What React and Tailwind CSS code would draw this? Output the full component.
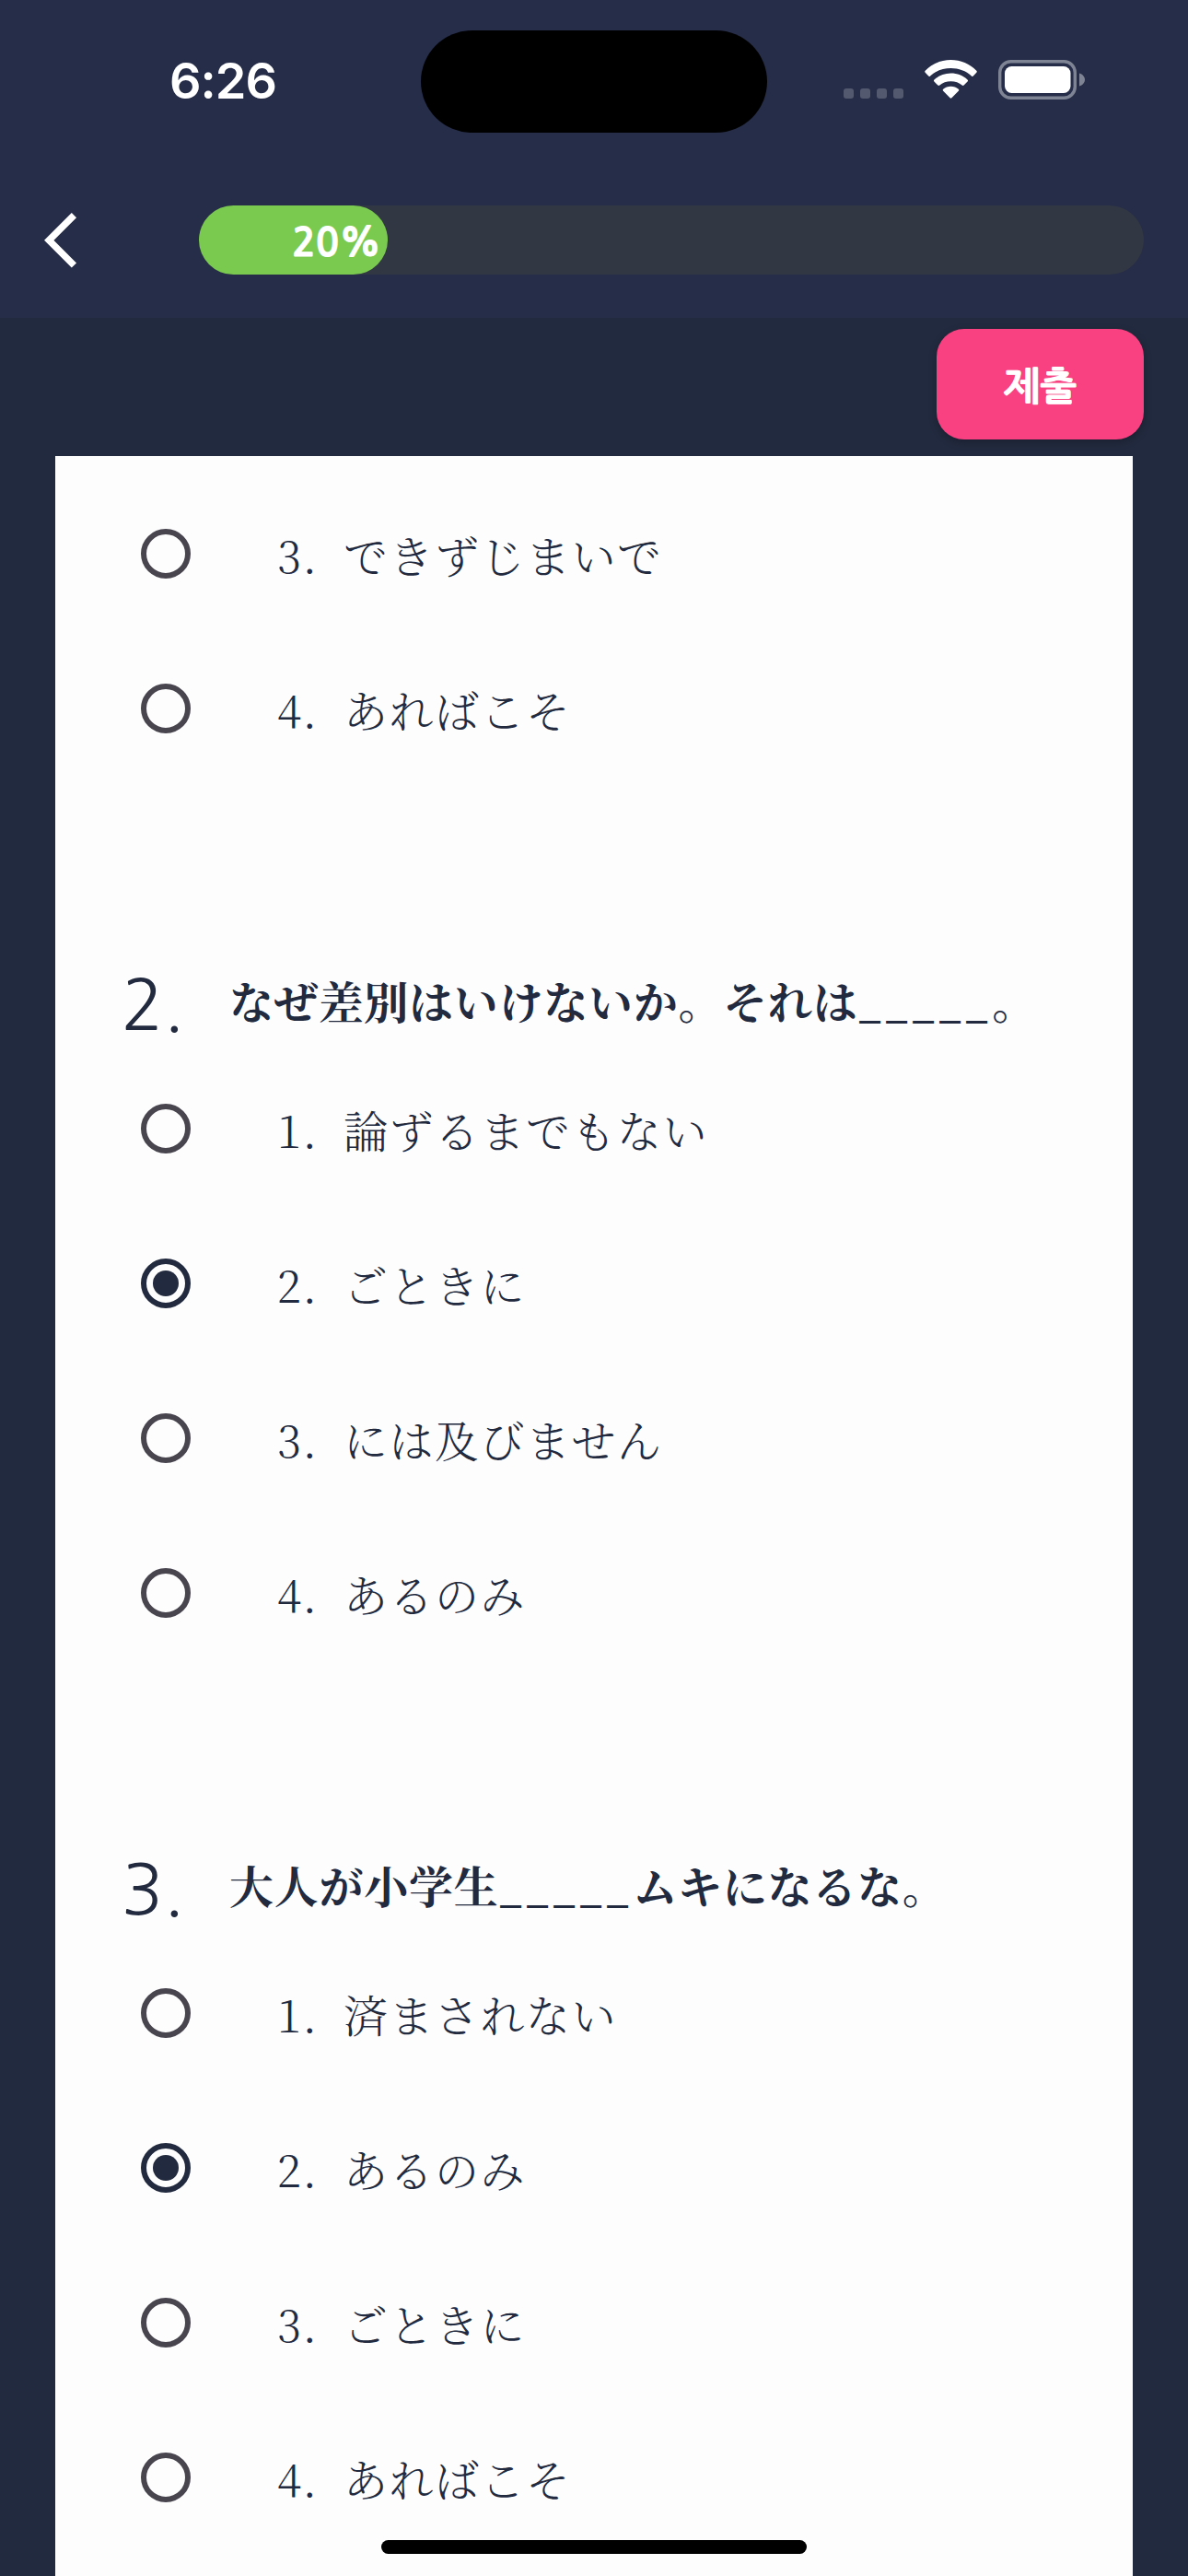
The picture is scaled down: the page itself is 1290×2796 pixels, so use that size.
const mincho = "font-['Noto_Serif_CJK_JP','Noto_Serif_JP','Noto_Sans_CJK_JP',serif]";

const questions = [
  { options: ["できずじまいで", "あればこそ"], first: 3, selected: null },
  {
    number: 2,
    before: "なぜ差別はいけないか。それは",
    after: "。",
    options: ["論ずるまでもない", "ごときに", "には及びません", "あるのみ"],
    first: 1,
    selected: 2,
  },
  {
    number: 3,
    before: "大人が小学生",
    after: "ムキになるな。",
    options: ["済まされない", "あるのみ", "ごときに", "あればこそ"],
    first: 1,
    selected: 2,
  },
];

function StatusBar() {
  return (
    <div className="flex h-[178px] items-start">
      <div className="ml-[184px] mt-[56px] w-[273px] font-['Inter',sans-serif] text-[54px] font-semibold leading-[64px] tracking-[-1px] text-white">
        6:26
      </div>
      <div className="mt-[33px] h-[111px] w-[376px] rounded-full bg-black" />
      <div className="ml-[83px] mt-[96px] flex gap-[7px]">
        {[0, 1, 2, 3].map((i) => (
          <div key={i} className="h-[11px] w-[11px] rounded-[3px] bg-[#535a6f]" />
        ))}
      </div>
      <svg className="ml-[23px] mt-[65px]" width="57" height="42" viewBox="0 0 57 42" fill="#fff">
        <path d="M28.5 0C39 0 49 4.300 56.300 11.700Q57.300 12.700 56.300 13.800L52.800 17.500Q51.900 18.400 50.900 17.400C45 12 37 9 28.500 9S12 12 6.100 17.400Q5.100 18.400 4.200 17.500L.7 13.800Q-.3 12.700 .7 11.700C8 4.300 18 0 28.500 0Z" />
        <path d="M28.500 14.600C35.500 14.600 41.800 17.200 46.500 21.500Q47.600 22.500 46.600 23.600L42.600 27.600Q41.700 28.500 40.700 27.600C37.500 24.800 33.200 23.300 28.500 23.300S19.500 24.800 16.300 27.600Q15.300 28.500 14.400 27.600L10.400 23.600Q9.400 22.500 10.500 21.500C15.200 17.200 21.500 14.600 28.500 14.600Z" />
        <path d="M28.500 28.800C31.700 28.800 34.600 29.900 36.800 31.700Q37.800 32.700 36.800 33.700L29.400 41.300Q28.500 42.200 27.600 41.300L20.200 33.700Q19.200 32.700 20.200 31.700C22.400 29.900 25.300 28.800 28.500 28.800Z" />
      </svg>
      <svg className="ml-[23px] mt-[65px]" width="95" height="43" viewBox="0 0 95 43">
        <rect x="1.700" y="1.700" width="81.600" height="39.600" rx="12" fill="none" stroke="#7f8494" strokeWidth="3.400" />
        <rect x="7" y="7" width="71.500" height="29" rx="7.500" fill="#fff" />
        <path d="M88 14.500C91.500 15.500 94 18.300 94 21.500S91.500 27.500 88 28.500Z" fill="#7f8494" />
      </svg>
    </div>
  );
}

function Header() {
  return (
    <header className="h-[345px] shrink-0 bg-[#262d48]">
      <StatusBar />
      <div className="flex items-start pt-[45px]">
        <svg className="ml-[48px] mt-[8px]" width="36" height="60" viewBox="0 0 36 60" fill="none" stroke="#fff" strokeWidth="7.400">
          <path d="M32.400 2.600L5.200 29.800L32.400 57" />
        </svg>
        <div className="ml-[132px] flex h-[75px] w-[1026px] rounded-full bg-[#323843]">
          <div className="flex h-full w-[205px] items-center justify-end rounded-full bg-[#7aca50] pr-[7px] pt-[6px] font-['NanumGothic','Noto_Sans',sans-serif] text-[42px] font-bold leading-[69px] text-white [-webkit-text-stroke:1px_#fff]">
            20%
          </div>
        </div>
      </div>
    </header>
  );
}

function Radio({ checked }) {
  return checked ? (
    <span className="flex h-[54px] w-[54px] items-center justify-center rounded-full border-[6px] border-[#222a3f]">
      <span className="h-[28px] w-[28px] rounded-full bg-[#222a3f]" />
    </span>
  ) : (
    <span className="h-[54px] w-[54px] rounded-full border-[6px] border-[#49454f]" />
  );
}

function Option({ number, text, checked }) {
  return (
    <li className="flex h-[168px] items-center pl-[93px]">
      <Radio checked={checked} />
      <span className={`ml-[94px] mt-[2px] w-[72px] text-[48px] font-[350] leading-[60px] tracking-[1.5px] ${mincho}`}>{number}.</span>
      <span className={`mt-[2px] text-[48px] font-[350] leading-[60px] tracking-[1.5px] ${mincho}`}>{text}</span>
    </li>
  );
}

function Question({ number, before, after, options, first, selected }) {
  return (
    <section className="mb-[168px]">
      {number && (
        <div className="flex h-[120px] items-center pl-[72px] pt-[10px]">
          <span className="mt-[11px] w-[117px] font-['NanumGothic','Open_Sans',sans-serif] text-[75px] font-light leading-[100px]">{number}.</span>
          <h2 className={`whitespace-nowrap text-[48px] font-bold leading-[60px] tracking-[0.75px] ${mincho}`}>
            {before}
            <span className="pl-[1px] align-[1px] font-['Noto_Sans_CJK_JP',sans-serif] text-[43px] font-medium leading-none tracking-[4.8px]">_____</span>
            {after}
          </h2>
        </div>
      )}
      <ul>
        {options.map((text, i) => (
          <Option key={i} number={first + i} text={text} checked={first + i === selected} />
        ))}
      </ul>
    </section>
  );
}

export default function App() {
  return (
    <div className="relative flex h-[2796px] w-[1290px] flex-col overflow-hidden bg-[#222a3f] text-[#222a3f]">
      <Header />
      <div className="flex h-[150px] shrink-0 justify-end pr-[48px] pt-[12px]">
        <button className="flex h-[120px] w-[225px] items-center justify-center rounded-[30px] bg-[#f94080] pt-[4px] font-['NanumGothic','Noto_Sans_CJK_KR',sans-serif] text-[42px] font-bold text-white shadow-[0_3px_9px_rgba(0,0,0,0.25)] [-webkit-text-stroke:1px_#fff]">
          제출
        </button>
      </div>
      <main className="mx-[60px] flex-1 overflow-hidden bg-[#fdfdfd] pt-[22px]">
        {questions.map((q, i) => (
          <Question key={i} {...q} />
        ))}
      </main>
      <div className="absolute bottom-[24px] left-[414px] h-[15px] w-[462px] rounded-full bg-black" />
    </div>
  );
}
